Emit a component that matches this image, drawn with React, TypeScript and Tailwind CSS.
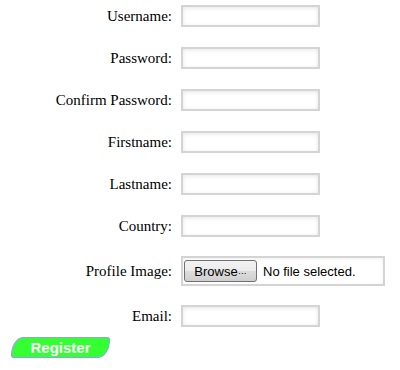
import React from "react";

const serif = { fontFamily: '"Liberation Serif", "Times New Roman", serif' };
const sans = { fontFamily: '"Liberation Sans", Arial, sans-serif' };

function Label({ children }: { children: React.ReactNode }) {
  return (
    <div className="text-right text-[15px] leading-none text-black whitespace-nowrap" style={serif}>
      {children}
    </div>
  );
}

function TextInput({ type = "text" }: { type?: string }) {
  return (
    <input
      type={type}
      className="block w-[139px] h-[22px] border-2 border-[#d4d4d4] bg-white outline-none shadow-[inset_0_1px_4px_rgba(0,0,0,0.10)]"
    />
  );
}

function Row({ label, children, className = "" }: { label: string; children: React.ReactNode; className?: string }) {
  return (
    <div className={`grid grid-cols-[172px_auto] gap-x-[9px] items-center ${className}`}>
      <Label>{label}</Label>
      <div>{children}</div>
    </div>
  );
}

export default function App() {
  return (
    <div className="w-[400px] h-[370px] bg-white overflow-hidden pt-[5px]">
      <div className="flex flex-col gap-[20px]">
        <Row label="Username:"><TextInput /></Row>
        <Row label="Password:"><TextInput type="password" /></Row>
        <Row label="Confirm Password:"><TextInput type="password" /></Row>
        <Row label="Firstname:"><TextInput /></Row>
        <Row label="Lastname:"><TextInput /></Row>
        <Row label="Country:"><TextInput /></Row>
      </div>
      <Row label="Profile Image:" className="mt-[19px]">
        <div className="flex items-center w-[204px] h-[30px] border-2 border-[#d4d4d4] bg-white pl-[1px] shadow-[inset_0_1px_4px_rgba(0,0,0,0.06)]">
          <button
            type="button"
            className="w-[73px] h-[22px] border border-[#707070] rounded-[3px] bg-[linear-gradient(#f2f2f2,#ebebeb_50%,#dddddd_50%,#cfcfcf)] text-[13px] leading-none text-black flex items-center justify-center"
            style={sans}
          >
            Browse<span className="text-[9px] leading-none self-end mb-[5px]">…</span>
          </button>
          <span className="ml-[6px] text-[13px] leading-none text-black whitespace-nowrap" style={sans}>
            No file selected.
          </span>
        </div>
      </Row>
      <Row label="Email:" className="mt-[19px]"><TextInput type="email" /></Row>
      <div className="mt-[10px] ml-[11px]">
        <button
          type="button"
          className="w-[99px] h-[21px] bg-[#33ff33] border border-[#8aa8e0] rounded-tl-[14px_20px] rounded-br-[14px_20px] rounded-tr-[3px] rounded-bl-[3px] text-white font-bold text-[15px] leading-none flex items-center justify-center"
          style={sans}
        >
          Register
        </button>
      </div>
    </div>
  );
}
